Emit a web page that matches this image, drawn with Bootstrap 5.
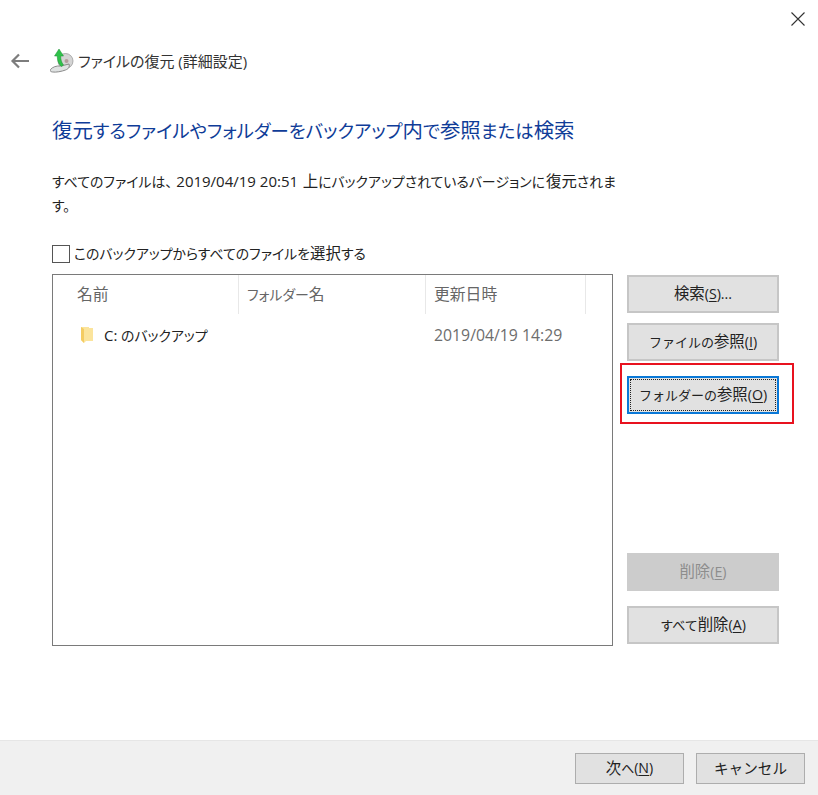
<!DOCTYPE html>
<html lang="ja">
<head>
<meta charset="utf-8">
<title>ファイルの復元</title>
<link href="https://cdn.jsdelivr.net/npm/bootstrap@5.3.0/dist/css/bootstrap.min.css" rel="stylesheet">
<style>
html,body{height:795px;overflow:hidden}
body{background:#fff;font-family:"Open Sans","Noto Sans CJK JP",sans-serif;font-feature-settings:"palt";font-size:13.9px;color:#222;line-height:1.4}
.kj{font-size:15.4px}
.ln{font-size:15px}
.shell{width:818px;height:795px;display:flex;flex-direction:column}
.topzone{height:44px;display:flex;justify-content:flex-end;align-items:flex-start;padding:12px 13px 0 0}
.crumb{height:34px;padding-left:10px;color:#333;font-size:15px}
.crumb .backic{width:20px;margin-right:20px}
.crumb .appic{width:24px;margin-right:4px}
.bigtitle{font-size:18.4px;color:#0f3c98;font-weight:400;margin:38px 0 0 52px;line-height:28px}
.bigtitle .kj{font-size:20.4px}
.infotxt{margin:24px 0 0 52px;line-height:24px;color:#222;white-space:nowrap}
.infotxt .ln{margin-left:4px}
.infotxt .kj{margin-left:1px}
.allcheck{margin:26px 0 0 52px;height:20px;gap:4px}
.boxmark{width:18px;height:18px;border:1px solid #555;background:#fff}
.workrow{margin:10px 0 0 52px;gap:14px;height:372px}
.filebox{width:561px;border:1px solid #7a7a7a;height:372px}
.headrow{height:39px;color:#666}
.headrow .kj{font-size:15.8px}
.headrow>div{padding-left:8px;display:flex;align-items:center;border-right:1px solid #e8e8e8;height:39px}
.hname{width:186px;padding-left:24px!important}
.hfolder{width:187px}
.hdate{width:160px}
.filerow{height:42px;padding-left:27px}
.filerow .fdate{margin-left:auto;width:150px;color:#6d6d6d;margin-right:28px;white-space:nowrap;font-size:15.8px}
.foldic{width:14px;margin-right:10px}
.sidecol{width:152px;padding-top:1px}
.winbtn{display:flex;align-items:center;justify-content:center;background:#e1e1e1;border:2px solid #c6c6c6;color:#222;font-size:13px;border-radius:0;padding:0;width:152px;height:38px;line-height:1;white-space:nowrap}
.winbtn u{text-underline-offset:2px}
.winbtn .ln{font-size:14.2px}
.focusbtn{position:relative;border-color:#0a78d7;margin-top:15px}
.focusbtn::after{content:"";position:absolute;inset:1px;border:1px dotted #222}
.gap10{margin-top:10px}
.offbtn{background:#ccc;border-color:#ccc;color:#8d8d8d;margin-top:139px}
.gap15{margin-top:15px}
.redframe{position:absolute;left:620px;top:363px;width:174px;height:61px;border:2px solid #e8121f;pointer-events:none}
.bottombar{margin-top:auto;height:55px;background:#f0f0f0;border-top:1px solid #e6e6e6;padding:12px 13px 0 0;justify-content:flex-end;gap:12px}
.bottombar .winbtn{width:109px;height:31px;border:1px solid #adadad}
.cancelword{font-size:14.6px}
</style>
</head>
<body>
<div class="shell position-relative">
  <div class="topzone">
    <svg width="14" height="14" viewBox="0 0 14 14"><path d="M.5.5l13 13M13.5.5l-13 13" stroke="#333" stroke-width="1.1" fill="none"/></svg>
  </div>
  <div class="crumb d-flex align-items-center">
    <svg class="backic" height="16" viewBox="0 0 20 16"><path d="M9 1.5L2.5 8 9 14.5M3 8h16" stroke="#7d7d7d" stroke-width="2.2" fill="none"/></svg>
    <svg class="appic" height="26" viewBox="0 0 24 26">
      <circle cx="15.500" cy="13" r="7.500" fill="#d4d4d4" stroke="#9c9c9c" stroke-width=".8"/>
      <circle cx="16.500" cy="13" r="2" fill="#b39d9d"/>
      <path d="M.5 21.500c2-2.500 6-4 10.500-3.500l8-2c1 2.500-.5 5-3.500 6-4 1.500-9.500 2.500-13 2-2-.3-3-1.300-2-2.500z" fill="#dfe2e2" stroke="#7f7f7f" stroke-width=".9"/>
      <path d="M9 1L4.500 8h2.700c.2 4 1 8 4.300 10.500l2-1.500c-2-2.500-2.800-5.500-2.800-9h2.800z" fill="#2fc24a" stroke="#1f8f35" stroke-width=".5"/>
    </svg>
    <span>ファイルの復元 (詳細設定)</span>
  </div>
  <h1 class="bigtitle"><span class="kj">復元</span>するファイルやフォルダーをバックアップ<span class="kj">内</span>で<span class="kj">参照</span>または<span class="kj">検索</span></h1>
  <p class="infotxt mb-0">すべてのファイルは、<span class="ln">2019/04/19 20:51</span> <span class="kj">上</span>にバックアップされているバージョンに<span class="kj">復元</span>されま<br>す。</p>
  <div class="allcheck d-flex align-items-center"><span class="boxmark"></span><span>このバックアップからすべてのファイルを<span class="kj">選択</span>する</span></div>
  <div class="workrow d-flex">
    <div class="filebox">
      <div class="headrow d-flex">
        <div class="hname"><span class="kj">名前</span></div><div class="hfolder"><span>フォルダー<span class="kj">名</span></span></div><div class="hdate"><span class="kj">更新日時</span></div>
      </div>
      <div class="filerow d-flex align-items-center">
        <svg class="foldic" height="18" viewBox="0 0 14 18"><path d="M1 1h8v1h4v13H6l-2 2-3-3z" fill="#fbe49c"/><path d="M1 1l3 2v14l-3-3z" fill="#f4cc62"/></svg>
        <span><span class="ln">C:</span> のバックアップ</span>
        <span class="fdate">2019/04/19 14:29</span>
      </div>
    </div>
    <div class="sidecol d-flex flex-column">
      <button type="button" class="winbtn"><span class="kj">検索</span><span class="ln">(<u>S</u>)...</span></button>
      <button type="button" class="winbtn gap10">ファイルの<span class="kj">参照</span><span class="ln">(<u>I</u>)</span></button>
      <button type="button" class="winbtn focusbtn">フォルダーの<span class="kj">参照</span><span class="ln">(<u>O</u>)</span></button>
      <button type="button" class="winbtn offbtn"><span class="kj">削除</span><span class="ln">(<u>E</u>)</span></button>
      <button type="button" class="winbtn gap15">すべて<span class="kj">削除</span><span class="ln">(<u>A</u>)</span></button>
    </div>
  </div>
  <div class="redframe"></div>
  <div class="bottombar d-flex">
    <button type="button" class="winbtn"><span class="kj">次</span>へ<span class="ln">(<u>N</u>)</span></button>
    <button type="button" class="winbtn"><span class="cancelword">キャンセル</span></button>
  </div>
</div>
<script src="https://cdn.jsdelivr.net/npm/bootstrap@5.3.0/dist/js/bootstrap.bundle.min.js"></script>
</body>
</html>
